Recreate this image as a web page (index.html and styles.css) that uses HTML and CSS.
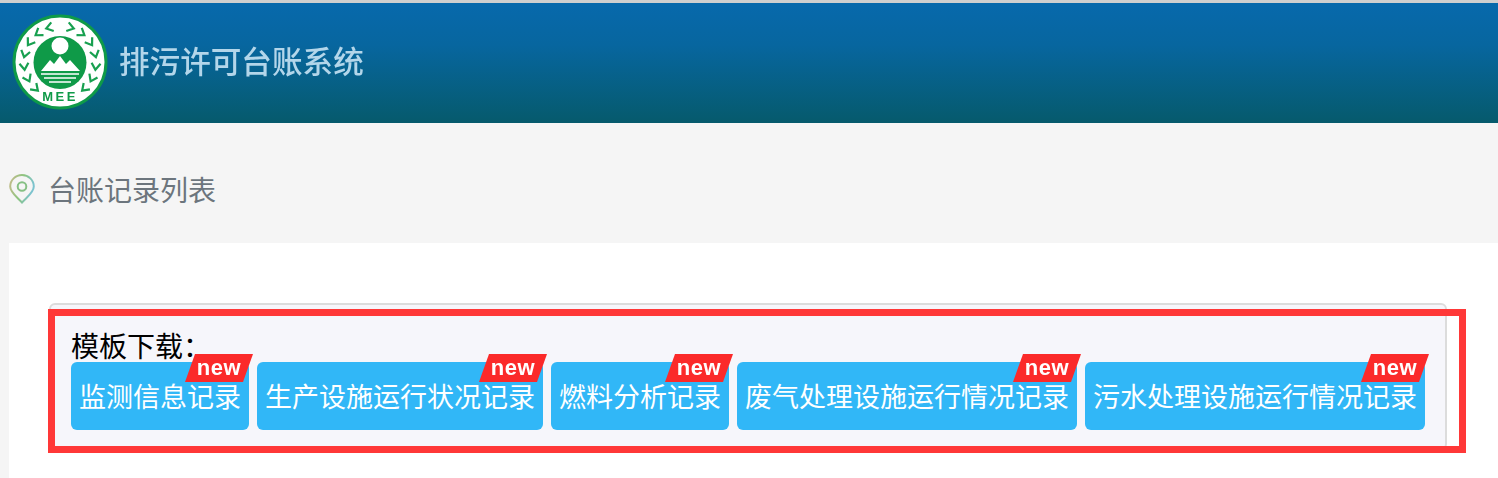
FILE: index.html
```html
<!DOCTYPE html>
<html lang="zh-CN">
<head>
<meta charset="utf-8">
<title>排污许可台账系统</title>
<link rel="stylesheet" href="styles.css">
</head>
<body>
<header class="top">
  <svg class="logo" viewBox="0 0 96 96" width="96" height="96" aria-hidden="true">
    <defs>
      <path id="pair" d="M50.5 7.5 L44 12 L50.5 16.5" fill="none" stroke="#18a050" stroke-width="2.2"/>
      <g id="branch">
        <use href="#pair" transform="rotate(-16 48 48)"/>
        <use href="#pair" transform="rotate(-36 48 48)"/>
        <use href="#pair" transform="rotate(-56 48 48)"/>
        <use href="#pair" transform="rotate(-76 48 48)"/>
        <use href="#pair" transform="rotate(-96 48 48)"/>
        <use href="#pair" transform="rotate(-116 48 48)"/>
        <use href="#pair" transform="rotate(-136 48 48)"/>
      </g>
    </defs>
    <circle cx="48" cy="48" r="46" fill="#fff" stroke="#0f9a48" stroke-width="3"/>
    <use href="#branch"/>
    <use href="#branch" transform="translate(96 0) scale(-1 1)"/>
    <circle cx="48" cy="48.5" r="26.5" fill="#0f9a48"/>
    <circle cx="48" cy="32" r="8.5" fill="#fff"/>
    <path d="M29 57 L38 46 L42 50 L48 42 L54 50 L58 46 L68 57 Z" fill="#fff"/>
    <path d="M29 60 H67 M32 64 H64 M37 68 H59" stroke="#fff" stroke-width="1.6"/>
    <text class="logo-text" x="48" y="87" text-anchor="middle">MEE</text>
  </svg>
  <span class="system">排污许可台账系统</span>
</header>

<nav class="crumb">
  <svg class="pin" viewBox="0 0 26 30" width="26" height="30" aria-hidden="true">
    <defs>
      <linearGradient id="pinline" x1="0" y1="0" x2="1" y2="0.3">
        <stop offset="0" stop-color="#c5bb8a"/>
        <stop offset="0.55" stop-color="#8cc47f"/>
        <stop offset="1" stop-color="#7cc3cf"/>
      </linearGradient>
    </defs>
    <path d="M13 28.5 C8 23 1.2 18.5 1.2 12.5 A11.8 11.5 0 0 1 24.8 12.5 C24.8 18.5 18 23 13 28.5 Z" fill="none" stroke="url(#pinline)" stroke-width="2"/>
    <circle cx="13" cy="12.5" r="4.3" fill="none" stroke="#86c084" stroke-width="2"/>
  </svg>
  <span class="crumb-text">台账记录列表</span>
</nav>

<main class="panel">
  <section class="box">
    <div class="label">模板下载：</div>
    <div class="buttons">
      <a class="btn">监测信息记录<span class="tag"><span class="tag-text">new</span></span></a>
      <a class="btn">生产设施运行状况记录<span class="tag"><span class="tag-text">new</span></span></a>
      <a class="btn">燃料分析记录<span class="tag"><span class="tag-text">new</span></span></a>
      <a class="btn">废气处理设施运行情况记录<span class="tag"><span class="tag-text">new</span></span></a>
      <a class="btn">污水处理设施运行情况记录<span class="tag"><span class="tag-text">new</span></span></a>
    </div>
  </section>
</main>
<div class="highlight"></div>
</body>
</html>
```
FILE: styles.css
```css
* { box-sizing: border-box; }
html, body { height: 478px; overflow: hidden; }
body {
  margin: 0;
  position: relative;
  background: #f5f5f5;
  font-family: "Noto Sans CJK SC", "Liberation Sans", sans-serif;
}
.top {
  height: 123px;
  border-top: 3px solid #cfcfcf;
  background: linear-gradient(180deg, #0769ac 0%, #07669f 35%, #065a6c 100%);
  display: flex;
  align-items: center;
  padding-left: 12px;
  gap: 11px;
}
.logo { flex: none; filter: blur(0.7px); margin-top: -2px; }
.logo-text {
  font-family: "Liberation Sans", sans-serif;
  font-size: 13px;
  font-weight: 700;
  letter-spacing: 2.5px;
  fill: #0f9a48;
}
.system {
  font-size: 30.6px;
  font-weight: 500;
  line-height: 40px;
  color: #b3d6ea;
  filter: blur(0.6px);
  margin-top: -6px;
}
.crumb {
  height: 120px;
  display: flex;
  align-items: center;
  padding: 12px 0 0 9px;
  gap: 13px;
}
.pin { flex: none; filter: blur(0.3px); }
.crumb-text {
  font-size: 28px;
  line-height: 40px;
  color: #6c757d;
}
.panel {
  margin-left: 9px;
  height: 235px;
  background: #fff;
  padding: 60px 51px 0 40px;
}
.box {
  height: 147px;
  border: 2px solid #dcdcdc;
  border-radius: 6px;
  background: #f6f6fb;
  padding: 23px 20px 0;
}
.label {
  font-size: 28px;
  line-height: 34px;
  color: #000;
}
.buttons {
  display: flex;
  gap: 8px;
}
.btn {
  position: relative;
  height: 68px;
  padding: 0 8px;
  border-radius: 6px;
  background: #31b7f7;
  color: #fff;
  font-size: 27px;
  line-height: 68px;
  white-space: nowrap;
}
.tag {
  position: absolute;
  top: -8px;
  right: -4px;
  width: 68px;
  height: 28px;
  background: #fb2a2a;
  clip-path: polygon(10px 0, 100% 0, 58px 100%, 0 100%);
  display: flex;
  align-items: center;
  justify-content: center;
}
.tag-text {
  font-family: "Liberation Sans", sans-serif;
  font-size: 22px;
  font-weight: 700;
  line-height: 28px;
  letter-spacing: 0.5px;
  color: #fff;
  filter: blur(0.5px);
}
.highlight {
  position: absolute;
  left: 48px;
  top: 309px;
  width: 1418px;
  height: 144px;
  border: 7px solid #ff3838;
  pointer-events: none;
}
```
